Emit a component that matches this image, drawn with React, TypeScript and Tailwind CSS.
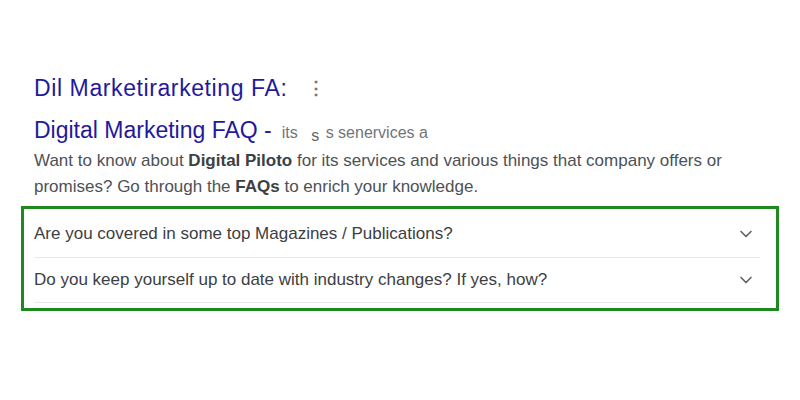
import { ChevronDown } from "lucide-react";

const faqs = [
  "Are you covered in some top Magazines / Publications?",
  "Do you keep yourself up to date with industry changes? If yes, how?",
];

export default function App() {
  return (
    <div className="h-[400px] w-[800px] bg-white font-['Liberation_Sans',Arial,sans-serif]">
      <div className="pt-[75px]">
        {/* titles */}
        <div className="flex items-center pl-[34px] text-[23px] leading-[26px] tracking-[0.6px] text-[#1f1a9c]">
          <span>Dil Marketirarketing FA:</span>
          <span className="ml-[20px] text-[18px] font-bold text-[#70757a]">⋮</span>
        </div>
        <div className="mt-[16px] flex h-[26px] items-baseline pl-[34px] leading-[26px]">
          <span className="text-[23px] text-[#1f1a9c]">Digital Marketing FAQ -</span>
          <span className="ml-[10px] text-[16px] text-[#70757a]">
            its <span className="relative top-[3px] ml-[9px] mr-[2px] text-[#5f6368]">s</span> s senervices a
          </span>
        </div>
        {/* description */}
        <p className="mt-[5px] w-[730px] pl-[34px] text-[17px] leading-[26px] text-[#4d5156]">
          Want to know about <b className="text-[#3c4043]">Digital Piloto</b> for its services and various things that company offers or promises? Go through the{" "}
          <b className="text-[#3c4043]">FAQs</b> to enrich your knowledge.
        </p>
        {/* faq box */}
        <div className="mx-[21px] mt-[6px] border-[3px] border-[#1e8a1e] pb-[5px] pl-[10px] pr-[16px]">
          {faqs.map((q, i) => (
            <div
              key={q}
              className={`flex items-center justify-between border-b border-[#e8eaed] text-[17px] text-[#3c4043] ${i === 0 ? "h-[49px] pt-[2px]" : "h-[45px]"}`}
            >
              <span>{q}</span>
              <ChevronDown className="mr-[4px] h-[20px] w-[20px] text-[#5f6368]" strokeWidth={2} />
            </div>
          ))}
        </div>
      </div>
    </div>
  );
}
